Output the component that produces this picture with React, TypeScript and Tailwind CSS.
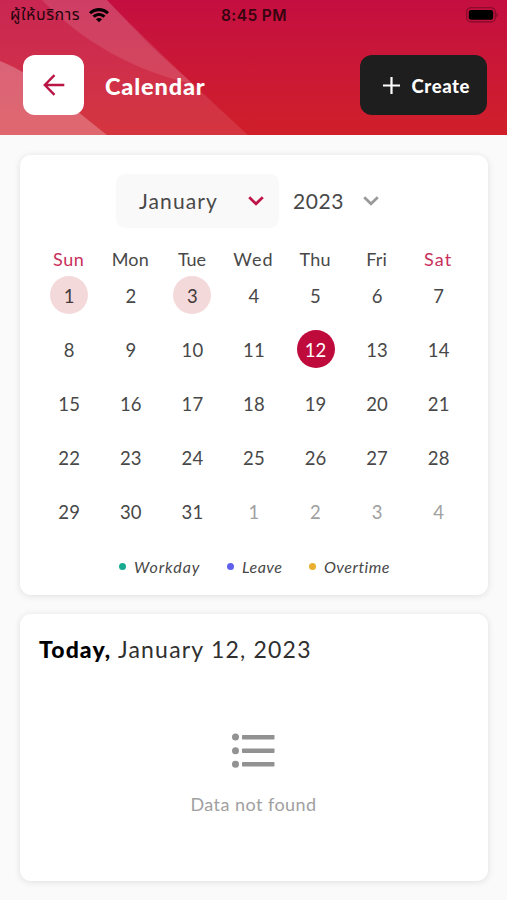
import React from "react";

const weekdays = [
  { label: "Sun", cls: "text-[#c8305c] tracking-[0.6px]" },
  { label: "Mon", cls: "text-[#484848] tracking-[0.2px]" },
  { label: "Tue", cls: "text-[#484848] tracking-[-0.1px]" },
  { label: "Wed", cls: "text-[#484848] tracking-[1.1px]" },
  { label: "Thu", cls: "text-[#484848] tracking-[0.2px]" },
  { label: "Fri", cls: "text-[#484848] tracking-[0.1px]" },
  { label: "Sat", cls: "text-[#c8305c] tracking-[1.2px]" },
];

const days = [
  ...Array.from({ length: 31 }, (_, i) => ({ n: i + 1, next: false })),
  ...[1, 2, 3, 4].map((n) => ({ n, next: true })),
];

const legend = [
  { label: "Workday", dot: "bg-[#16ab91]", w: "w-[108px]", track: "tracking-[0.95px]" },
  { label: "Leave", dot: "bg-[#6060ee]", w: "w-[82px]", track: "tracking-[0.5px]" },
  { label: "Overtime", dot: "bg-[#e9b02d]", w: "w-[81px]", track: "tracking-[0.5px]" },
];

function dayClass(n: number, next: boolean) {
  if (next) return "text-[#a0a0a0]";
  if (n === 12) return "bg-[#bf0a3c] text-white";
  if (n === 1 || n === 3) return "bg-[#f4d9da] text-[#443a3b]";
  return "text-[#484848]";
}

function Chevron({ color }: { color: string }) {
  return (
    <svg width="16" height="10" viewBox="0 0 16 10" fill="none">
      <path d="M1.2 1.2 8 7.8l6.8-6.6" stroke={color} strokeWidth="2.7" />
    </svg>
  );
}

function Header() {
  return (
    <header className="relative h-[135px] bg-linear-to-b from-[#c40e40] to-[#d01f29]">
      <svg className="absolute inset-0" width="507" height="135" viewBox="0 0 507 135">
        <path d="M0 0H107C145 39 197 88 248 135H0Z" fill="#fff" fillOpacity=".1" />
        <path d="M42 0H107C135 31 163 58 193 84C135 71 84 43 42 0Z" fill="#fff" fillOpacity=".11" />
        <path d="M0 61C38 76 70 106 107 135H0Z" fill="#fff" fillOpacity=".25" />
      </svg>
      <div className="relative flex h-[30px] items-center justify-between pl-[10px] pr-[9px] text-[#24040d]">
        <div className="flex w-[200px] items-center gap-[6px]">
          <span className="h-[30px] w-[73px] whitespace-nowrap text-[16px] leading-[30px] tracking-[0.55px] [font-family:'Noto_Sans_Thai','Noto_Sans','DejaVu_Sans',sans-serif]">
            ผู้ให้บริการ
          </span>
          <svg width="20" height="15" viewBox="0 0 20 15" fill="#080103">
            <path d="M0 4.2C5.7-1.4 14.3-1.4 20 4.2L17.9 6.3C13.4 2.1 6.6 2.1 2.1 6.3Z" />
            <path d="M3.5 7.7C7.3 4.2 12.7 4.2 16.5 7.7L14.3 9.8C11.8 7.5 8.2 7.5 5.7 9.8Z" />
            <path d="M7 11.2C8.8 9.7 11.2 9.7 13 11.2L10 14.3Z" />
          </svg>
        </div>
        <span className="whitespace-nowrap pt-[2px] font-[Inter] text-[15.5px] font-semibold tracking-[0.4px] text-[#35040f]">8:45 PM</span>
        <div className="flex w-[200px] justify-end">
          <svg width="32" height="16" viewBox="0 0 32 16">
            <rect x=".7" y=".7" width="28.6" height="14.2" rx="4.2" fill="none" stroke="#7d0b28" strokeWidth="1.1" />
            <rect x="2.8" y="2.9" width="24.4" height="9.9" rx="2.3" fill="#000" />
            <path d="M30.4 5.5c1.7.8 1.7 4.2 0 5Z" fill="#7d0b28" />
          </svg>
        </div>
      </div>
      <div className="relative flex items-center pl-[23px] pr-5 pt-[25px]">
        <button className="flex h-[60px] w-[61px] items-center justify-center rounded-[12px] bg-white">
          <svg width="22" height="22" viewBox="0 0 22 22" fill="none" stroke="#b91545" strokeWidth="2.4">
            <path d="M21.3 11H2M11.5 1.2 1.8 11l9.7 9.8" />
          </svg>
        </button>
        <h1 className="ml-[21px] whitespace-nowrap pt-[2px] text-[23.5px] font-black tracking-[0.85px] leading-[30px] text-white">Calendar</h1>
        <button className="ml-auto flex h-[60px] w-[127px] items-center rounded-[12px] bg-[#1e1e1e] pl-[22.5px] text-white">
          <svg width="17" height="17" viewBox="0 0 17 17" stroke="#fff" strokeWidth="2.2">
            <path d="M8.5 0v17M0 8.5h17" />
          </svg>
          <span className="ml-[12px] whitespace-nowrap pt-[3px] text-[18.5px] font-black tracking-[0.6px]">Create</span>
        </button>
      </div>
    </header>
  );
}

export default function App() {
  return (
    <div className="h-[900px] w-[507px] overflow-hidden bg-[#fafafa] font-[Lato,sans-serif]">
      <Header />
      <main className="flex flex-col gap-[19px] pl-5 pr-[19px] pt-5">
        <section className="h-[440px] rounded-[11px] bg-white pt-[19px] shadow-[0_1px_7px_rgba(0,0,0,0.11)]">
          <div className="flex h-[54px] items-center pl-24 text-[#484848]">
            <div className="flex h-[54px] w-[163px] items-center rounded-[9px] bg-[#f9f9f9] pl-[23px]">
              <span className="w-[109px] text-[21px] tracking-[1.1px]">January</span>
              <Chevron color="#bf1448" />
            </div>
            <span className="ml-[14px] w-[70px] text-[21px] tracking-[0.6px]">2023</span>
            <Chevron color="#999999" />
          </div>
          <div className="mt-[19px] grid w-[431px] grid-cols-7 ml-[18px] text-center text-[18px] leading-[24px]">
            {weekdays.map((d) => (
              <span key={d.label} className={d.cls}>{d.label}</span>
            ))}
          </div>
          <div className="ml-[18.5px] mt-[5px] grid w-[431px] grid-cols-7 justify-items-center">
            {days.map((d, i) => (
              <div key={i} className="h-[54px]">
                <div className={"flex h-[38px] w-[38px] items-center justify-center rounded-full pt-[3px] text-[18.5px] tracking-[0.2px] " + dayClass(d.n, d.next)}>
                  {d.n}
                </div>
              </div>
            ))}
          </div>
          <div className="flex pl-[99px] pt-[8px] text-[#484848]">
            {legend.map((l) => (
              <div key={l.label} className={"flex h-6 items-center " + l.w}>
                <i className={"h-[7px] w-[7px] rounded-full " + l.dot} />
                <span className={"ml-[8px] whitespace-nowrap pt-[2px] text-[16px] italic " + l.track}>{l.label}</span>
              </div>
            ))}
          </div>
        </section>
        <section className="flex h-[267px] flex-col items-center rounded-[11px] bg-white pt-[20px] shadow-[0_1px_7px_rgba(0,0,0,0.11)]">
          <h2 className="flex w-full whitespace-nowrap pl-[19px] text-[23px] leading-[30px] text-[#303030]">
            <span className="w-[79px] font-black tracking-[1.1px] text-black">Today,</span>
            <span className="tracking-[1.2px]">January 12, 2023</span>
          </h2>
          <svg className="mr-[2px] mt-[69px]" width="43" height="36" viewBox="0 0 43 36" fill="#929292">
            <circle cx="3.5" cy="4" r="3.5" />
            <circle cx="3.5" cy="17.7" r="3.5" />
            <circle cx="3.5" cy="31.2" r="3.5" />
            <rect x="10" y="1.9" width="32.5" height="4.5" rx=".7" />
            <rect x="10" y="15.5" width="32.5" height="4.5" rx=".7" />
            <rect x="10" y="29" width="32.5" height="4.5" rx=".7" />
          </svg>
          <p className="mr-px mt-[22px] text-[18px] leading-[26px] tracking-[0.45px] text-[#a0a0a0]">Data not found</p>
        </section>
      </main>
    </div>
  );
}
